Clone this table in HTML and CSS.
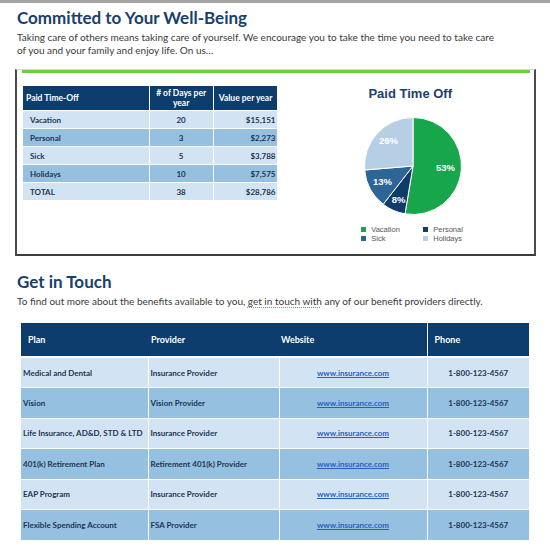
FILE: index.html
```html
<!DOCTYPE html>
<html>
<head>
<meta charset="utf-8">
<link rel="stylesheet" href="styles.css">
</head>
<body>
<div class="topbar"></div>
<main class="page">
  <h1 class="heading">Committed to Your Well-Being</h1>
  <p class="intro">Taking care of others means taking care of yourself. We encourage you to take the time you need to take care of you and your family and enjoy life. On us…</p>

  <section class="box">
    <div class="greenline"></div>
    <div class="box-body">
      <table class="pto">
        <thead>
          <tr><th class="c1">Paid Time-Off</th><th class="c2"># of Days per year</th><th class="c3">Value per year</th></tr>
        </thead>
        <tbody>
          <tr class="light"><td class="c1">Vacation</td><td class="c2">20</td><td class="c3">$15,151</td></tr>
          <tr class="dark"><td class="c1">Personal</td><td class="c2">3</td><td class="c3">$2,273</td></tr>
          <tr class="light"><td class="c1">Sick</td><td class="c2">5</td><td class="c3">$3,788</td></tr>
          <tr class="dark"><td class="c1">Holidays</td><td class="c2">10</td><td class="c3">$7,575</td></tr>
          <tr class="light"><td class="c1">TOTAL</td><td class="c2">38</td><td class="c3">$28,786</td></tr>
        </tbody>
      </table>
      <div class="chart">
        <div class="chart-title">Paid Time Off</div>
        <svg class="pie" width="100" height="100" viewBox="0 0 100 100">
          <path d="M50,50 L50,1.5 A48.5,48.5 0 1 1 42.02,97.84 Z" fill="#17a64b" stroke="#fff" stroke-width="1"/>
          <path d="M50,50 L42.02,97.84 A48.5,48.5 0 0 1 20.22,88.28 Z" fill="#0f3c68" stroke="#fff" stroke-width="1"/>
          <path d="M50,50 L20.22,88.28 A48.5,48.5 0 0 1 1.67,54.01 Z" fill="#2d6696" stroke="#fff" stroke-width="1"/>
          <path d="M50,50 L1.67,54.01 A48.5,48.5 0 0 1 50,1.5 Z" fill="#b6cfe4" stroke="#fff" stroke-width="1"/>
          <text x="82.5" y="51" class="pl">53%</text>
          <text x="25.5" y="24" class="pl">26%</text>
          <text x="19.5" y="65" class="pl">13%</text>
          <text x="35.5" y="83" class="pl">8%</text>
        </svg>
        <div class="legend">
          <div class="lg"><span class="sw sw-vac"></span>Vacation</div>
          <div class="lg"><span class="sw sw-per"></span>Personal</div>
          <div class="lg"><span class="sw sw-sick"></span>Sick</div>
          <div class="lg"><span class="sw sw-hol"></span>Holidays</div>
        </div>
      </div>
    </div>
  </section>

  <h2 class="heading h2">Get in Touch</h2>
  <p class="intro">To find out more about the benefits available to you, <span class="squiggle">get in touch with</span> any of our benefit providers directly.</p>

  <table class="contacts">
    <thead>
      <tr><th class="k1">Plan</th><th class="k2">Provider</th><th class="k3">Website</th><th class="k4">Phone</th></tr>
    </thead>
    <tbody>
      <tr class="light"><td>Medical and Dental</td><td>Insurance Provider</td><td class="web"><a href="#">www.insurance.com</a></td><td class="ph">1-800-123-4567</td></tr>
      <tr class="dark"><td>Vision</td><td>Vision Provider</td><td class="web"><a href="#">www.insurance.com</a></td><td class="ph">1-800-123-4567</td></tr>
      <tr class="light"><td>Life Insurance, AD&amp;D, STD &amp; LTD</td><td>Insurance Provider</td><td class="web"><a href="#">www.insurance.com</a></td><td class="ph">1-800-123-4567</td></tr>
      <tr class="dark"><td>401(k) Retirement Plan</td><td>Retirement 401(k) Provider</td><td class="web"><a href="#">www.insurance.com</a></td><td class="ph">1-800-123-4567</td></tr>
      <tr class="light"><td>EAP Program</td><td>Insurance Provider</td><td class="web"><a href="#">www.insurance.com</a></td><td class="ph">1-800-123-4567</td></tr>
      <tr class="dark"><td>Flexible Spending Account</td><td>FSA Provider</td><td class="web"><a href="#">www.insurance.com</a></td><td class="ph">1-800-123-4567</td></tr>
    </tbody>
  </table>
</main>
</body>
</html>
```

FILE: styles.css
```css
* { box-sizing: border-box; }
html, body { margin: 0; padding: 0; background: #fff; }
body { font-family: Lato, "Open Sans", sans-serif; color: #333; }

.topbar { height: 3px; background: #a4a4a4; }

.page { padding: 0 0 0 17px; }

.heading {
  margin: 5px 0 0 0;
  font-size: 17px;
  line-height: 20px;
  font-weight: 700;
  color: #17406d;
}
.h2 { margin-top: 16px; }

.intro {
  margin: 3px 0 0 0;
  width: 482px;
  font-size: 10px;
  line-height: 13px;
  color: #3a3a3a;
}

.squiggle { text-decoration: underline dotted #d07070; text-underline-offset: 2px; }

.box {
  margin: 12px 0 0 -2px;
  width: 521px;
  height: 187px;
  border-left: 2px solid #4a4a4a;
  border-right: 2px solid #4a4a4a;
  border-bottom: 2px solid #3d3d3d;
  border-top: 1px solid #d8d8d8;
  padding: 0 4px 0 5px;
}
.greenline { height: 3px; background: #6bcf46; }
.box-body { display: flex; align-items: flex-start; padding-top: 12px; }

.pto {
  border-collapse: collapse;
  font-size: 8px;
  font-weight: 700;
  color: #1d3553;
}
.pto th, .pto td { border: 1.5px solid #fff; }
.pto th {
  background: #0d3d6d;
  color: #fff;
  height: 25px;
  font-size: 8.5px;
  line-height: 10px;
  padding: 0 3px;
}
.pto .c1 { width: 127px; text-align: left; }
.pto th.c2 { width: 64px; text-align: center; }
.pto th.c3 { width: 65px; text-align: center; padding: 0 1px; }
.pto td { height: 18px; padding: 0 2px; }
.pto td.c1 { padding-left: 7px; }
.pto td.c2 { text-align: center; }
.pto td.c3 { text-align: right; }
.light td { background: #d2e4f3; }
.dark td { background: #95c0e0; }

.chart {
  width: 240px;
  margin-left: 12px;
  display: flex;
  flex-direction: column;
  align-items: center;
}
.chart-title {
  font-family: "Liberation Sans", Arial, sans-serif;
  font-weight: 700;
  font-size: 13px;
  line-height: 16px;
  color: #1d3f6b;
  margin-top: 1px;
}
.pie { display: block; margin-top: 14px; margin-left: 6px; }
.pl {
  font-family: "Liberation Sans", Arial, sans-serif;
  font-weight: 700;
  font-size: 9.5px;
  fill: #fff;
  text-anchor: middle;
  dominant-baseline: central;
}
.legend {
  display: grid;
  grid-template-columns: 62px 50px;
  margin-top: 9px;
  margin-left: 14px;
  font-family: "Liberation Sans", Arial, sans-serif;
  font-size: 7.5px;
  line-height: 9px;
  color: #555;
}
.lg { display: flex; align-items: center; }
.sw { width: 5px; height: 5px; margin-right: 5px; display: inline-block; }
.sw-vac { background: #17a64b; }
.sw-per { background: #0f3c68; }
.sw-sick { background: #2d6696; }
.sw-hol { background: #b6cfe4; }

.contacts {
  margin: 15px 0 0 4px;
  border-collapse: collapse;
  width: 508px;
  font-size: 8px;
  font-weight: 700;
  color: #1d3553;
}
.contacts th {
  background: #0d3d6d;
  color: #fff;
  text-align: left;
  height: 34px;
  font-size: 9px;
  padding: 0 0 0 7px;
  border-bottom: 2.5px solid #fff;
}
.contacts .k1 { width: 127px; }
.contacts .k2 { width: 131px; padding-left: 3px; }
.contacts .k3 { width: 148px; padding-left: 2px; border-right: 1.5px solid #fff; }
.contacts .k4 { width: 102px; }
.contacts td {
  height: 30.5px;
  padding: 0 2px 0 2px;
  border-bottom: 1.5px solid #fff;
  border-right: 1.5px solid #fff;
}
.contacts td:last-child { border-right: 0; }
.contacts td.web, .contacts td.ph { text-align: center; }
.contacts a { color: #2a5fbf; text-decoration: underline; }
```
